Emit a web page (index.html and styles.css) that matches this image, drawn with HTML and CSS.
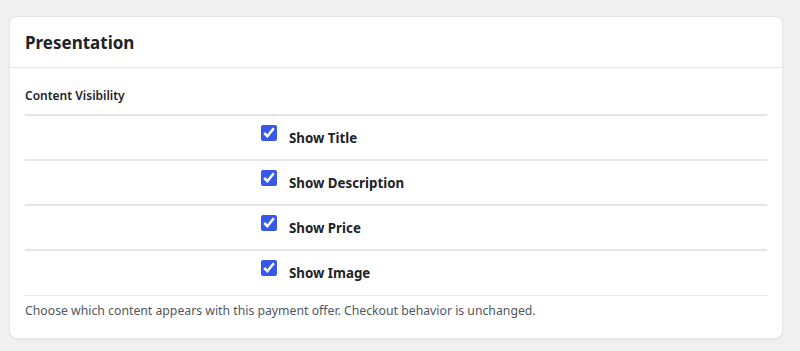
FILE: index.html
```html
<!DOCTYPE html>
<html lang="en">
<head>
    <meta charset="UTF-8">
    <meta name="viewport" content="width=device-width, initial-scale=1.0">
    <title>Presentation</title>
    <link rel="stylesheet" href="styles.css">
</head>
<body>
    <div class="card">
        <div class="card-header">
            <h2>Presentation</h2>
        </div>

        <div class="card-body">
            <h3 class="section-title">Content Visibility</h3>

            <!-- Visibility toggles -->
            <table class="form-table">
                <tr>
                    <th></th>
                    <td>
                        <label class="check">
                            <input type="checkbox" checked>
                            <span>Show Title</span>
                        </label>
                    </td>
                </tr>
                <tr>
                    <th></th>
                    <td>
                        <label class="check">
                            <input type="checkbox" checked>
                            <span>Show Description</span>
                        </label>
                    </td>
                </tr>
                <tr>
                    <th></th>
                    <td>
                        <label class="check">
                            <input type="checkbox" checked>
                            <span>Show Price</span>
                        </label>
                    </td>
                </tr>
                <tr>
                    <th></th>
                    <td>
                        <label class="check">
                            <input type="checkbox" checked>
                            <span>Show Image</span>
                        </label>
                    </td>
                </tr>
            </table>

            <p class="help">Choose which content appears with this payment offer. Checkout behavior is unchanged.</p>
        </div>
    </div>
</body>
</html>
```

FILE: styles.css
```css
* {
    margin: 0;
    padding: 0;
    box-sizing: border-box;
    font-family: "Noto Sans", Arial, sans-serif;
}

body {
    background-color: #f0f0f1;
    padding: 16px 17px 13px 9px;
}

.card {
    background-color: white;
    border: 1px solid #e4e4ea;
    border-radius: 8px;
    box-shadow: 0 1px 2px rgba(0,0,0,0.04);
}

.card-header {
    height: 51px;
    padding: 0 15px;
    display: flex;
    align-items: center;
    border-bottom: 1px solid #e4e4ea;
}

.card-header h2 {
    font-size: 17px;
    font-weight: 700;
    color: #1d2327;
}

.card-body {
    padding: 19px 15px 19px;
}

.section-title {
    font-size: 12px;
    font-weight: 600;
    color: #1d2327;
    margin-bottom: 10px;
}

.form-table {
    width: 100%;
    border-collapse: collapse;
    border-top: 2px solid #e4e6ec;
}

.form-table tr {
    border-bottom: 2px solid #e4e6ec;
}

.form-table tr:last-child {
    border-bottom: 1px solid #e8e8ec;
}

.form-table th {
    width: 226px;
}

.form-table td {
    height: 45px;
    padding: 0 10px;
    vertical-align: top;
}

.check {
    display: flex;
    align-items: flex-start;
    gap: 12px;
    padding-top: 9px;
}

.check input {
    width: 16px;
    height: 16px;
    accent-color: #3858e9;
}

.check span {
    font-size: 13.3px;
    font-weight: 700;
    color: #1d2327;
    padding-top: 4px;
}

.help {
    font-size: 12.25px;
    color: #50575e;
    margin-top: 6px;
}
```
